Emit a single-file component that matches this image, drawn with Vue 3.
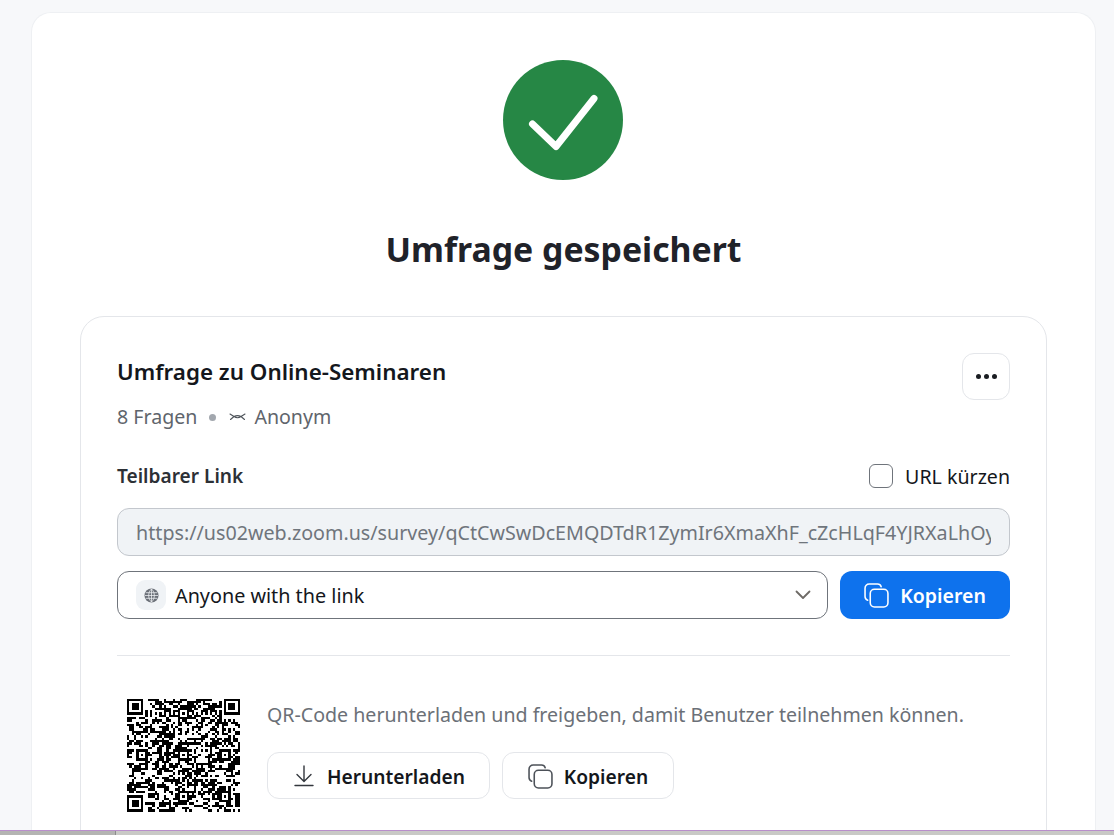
<script setup>
const N = 49
const cells = []
let seed = 20240611
const rnd = () => { seed = (seed * 1664525 + 1013904223) >>> 0; return (seed >>> 16) / 65536 }
const inFinder = (x, y) => (x < 8 && y < 8) || (x >= N - 8 && y < 8) || (x < 8 && y >= N - 8)
const finder = (x, y, ox, oy) => {
  const a = x - ox, b = y - oy
  if (a < 0 || b < 0 || a > 6 || b > 6) return false
  return a === 0 || b === 0 || a === 6 || b === 6 || (a >= 2 && a <= 4 && b >= 2 && b <= 4)
}
const aligns = [6, 24, 42]
for (let y = 0; y < N; y++) {
  let prev = false
  for (let x = 0; x < N; x++) {
    let on
    if (inFinder(x, y)) on = finder(x, y, 0, 0) || finder(x, y, N - 7, 0) || finder(x, y, 0, N - 7)
    else if (y === 6) on = x % 2 === 0
    else if (x === 6) on = y % 2 === 0
    else on = rnd() > (prev ? 0.42 : 0.58)
    prev = on
    if (on) cells.push({ x, y })
  }
}
for (const ay of aligns) for (const ax of aligns) {
  if ((ax === 6 && ay === 6) || (ax === 42 && ay === 6) || (ax === 6 && ay === 42)) continue
  for (let j = -2; j <= 2; j++) for (let i = -2; i <= 2; i++) {
    const idx = cells.findIndex(c => c.x === ax + i && c.y === ay + j)
    const on = Math.abs(i) === 2 || Math.abs(j) === 2 || (i === 0 && j === 0)
    if (on && idx < 0) cells.push({ x: ax + i, y: ay + j })
    if (!on && idx >= 0) cells.splice(idx, 1)
  }
}
const qrPath = cells.map(c => `M${c.x} ${c.y}h1v1h-1z`).join('')
</script>

<template>
  <div class="page">
    <div class="viewport">
      <main class="sheet">
        <svg class="success" viewBox="0 0 120 120" aria-hidden="true">
          <circle cx="60" cy="60" r="60" fill="#268745" />
          <path d="M29.500 64 L 53 86.500 L 91 38.500" fill="none" stroke="#fff" stroke-width="7" stroke-linecap="round" stroke-linejoin="round" />
        </svg>
        <h1 class="title">Umfrage gespeichert</h1>

        <section class="card">
          <div class="head">
            <div>
              <h2 class="name">Umfrage zu Online-Seminaren</h2>
              <div class="meta">
                <span>8 Fragen</span>
                <i class="dot"></i>
                <svg class="eye" viewBox="0 0 17 10" aria-hidden="true">
                  <path d="M1 2 5 4.500Q8.500 7 12 4.500L16 2M5 4.500 1.500 7.500M12 4.500 15.500 7.500M5 4.500Q8.500 2.800 12 4.500" fill="none" stroke="#4d5359" stroke-width="1.100" stroke-linecap="round" stroke-linejoin="round" />
                </svg>
                <span>Anonym</span>
              </div>
            </div>
            <button class="more" aria-label="Mehr">
              <i></i><i></i><i></i>
            </button>
          </div>

          <div class="link-head">
            <span class="link-label">Teilbarer Link</span>
            <label class="short">
              <span class="check"></span>
              <span>URL kürzen</span>
            </label>
          </div>

          <div class="url"><span>https://us02web.zoom.us/survey/qCtCwSwDcEMQDTdR1ZymIr6XmaXhF_cZcHLqF4YJRXaLhOyZ2Qk</span></div>

          <div class="access">
            <div class="select">
              <span class="globe">
                <svg viewBox="0 0 16 16" aria-hidden="true">
                  <circle cx="8" cy="8" r="7.500" fill="#6b7078" />
                  <path d="M1 8h14M1.800 5h12.400M1.800 11h12.400M8 1v14M8 1C5.500 3.500 5 6 5 8s.5 4.500 3 7M8 1c2.500 2.500 3 5 3 7s-.5 4.500-3 7" fill="none" stroke="#f0f3f6" stroke-width="0.800" />
                </svg>
              </span>
              <span class="select-text">Anyone with the link</span>
              <svg class="chev" viewBox="0 0 16 10" aria-hidden="true">
                <path d="M1.500 1.500 8 8l6.500-6.500" fill="none" stroke="#6e6a66" stroke-width="1.800" stroke-linecap="round" stroke-linejoin="round" />
              </svg>
            </div>
            <button class="primary">
              <svg class="copy" viewBox="0 0 24 24" aria-hidden="true">
                <path d="M3.500 16.500C2 16 1 14.800 1 13V5c0-2.300 1.700-4 4-4h8c1.700 0 3 1 3.500 2.500" fill="none" stroke="currentColor" stroke-width="1.500" stroke-linecap="round" />
                <rect x="6" y="6" width="17" height="17" rx="4" fill="none" stroke="currentColor" stroke-width="1.500" />
              </svg>
              Kopieren
            </button>
          </div>

          <hr class="rule" />

          <div class="qr-row">
            <svg class="qr" viewBox="0 0 49 49" shape-rendering="crispEdges" aria-hidden="true">
              <path :d="qrPath" fill="#000" />
            </svg>
            <div class="qr-side">
              <p class="qr-text">QR-Code herunterladen und freigeben, damit Benutzer teilnehmen können.</p>
              <div class="qr-actions">
                <button class="ghost ghost-dl">
                  <svg class="dl" viewBox="0 0 20 22" aria-hidden="true">
                    <path d="M10 1v15M3 9.500 10 16.500l7-7M1 20.500h18" fill="none" stroke="#33373d" stroke-width="1.400" stroke-linecap="round" stroke-linejoin="round" />
                  </svg>
                  Herunterladen
                </button>
                <button class="ghost ghost-copy">
                  <svg class="copy" viewBox="0 0 24 24" aria-hidden="true">
                    <path d="M3.500 16.500C2 16 1 14.800 1 13V5c0-2.300 1.700-4 4-4h8c1.700 0 3 1 3.500 2.500" fill="none" stroke="#4c5158" stroke-width="1.500" stroke-linecap="round" />
                    <rect x="6" y="6" width="17" height="17" rx="4" fill="none" stroke="#4c5158" stroke-width="1.500" />
                  </svg>
                  Kopieren
                </button>
              </div>
            </div>
          </div>
        </section>
      </main>
    </div>
    <footer class="strip">
      <span class="strip-left"></span>
      <span class="strip-right"></span>
    </footer>
  </div>
</template>

<style>
html, body { margin: 0; background: #f7f8fa; }
</style>

<style scoped>
* { box-sizing: border-box; }
.page {
  height: 835px;
  width: 1114px;
  display: flex;
  flex-direction: column;
  overflow: hidden;
  background: #f7f8fa;
  font-family: "Noto Sans", "Open Sans", sans-serif;
  color: #14171c;
}
.viewport {
  flex: 1;
  min-height: 0;
  overflow: hidden;
  padding: 12px 18px 0 31px;
}
.sheet {
  background: #fff;
  border: 1px solid #eef0f3;
  border-bottom: 0;
  border-radius: 20px 20px 0 0;
  height: 1000px;
  padding-top: 47px;
  display: flex;
  flex-direction: column;
  align-items: center;
}
.success { width: 120px; height: 120px; display: block; margin-right: 1px; }
.title {
  margin: 47px 0 0;
  font-size: 33.800px;
  line-height: 44px;
  font-weight: 700;
  color: #1f2229;
}
.card {
  margin-top: 45px;
  width: 967px;
  border: 1px solid #e4e6ea;
  border-radius: 24px;
  padding: 36px 36px 60px;
  flex: none;
}
.head { display: flex; justify-content: space-between; align-items: flex-start; }
.name {
  margin: 0;
  font-size: 22.400px;
  line-height: 38px;
  font-weight: 600;
  color: #14171c;
}
.meta {
  margin-top: 13px;
  display: flex;
  align-items: center;
  font-size: 19.600px;
  line-height: 26px;
  color: #5f656c;
}
.dot { width: 7px; height: 7px; border-radius: 50%; background: #a2a7ae; margin: 0 13px 0 12px; }
.eye { width: 17px; height: 10px; margin-right: 8px; }
.more {
  width: 48px;
  height: 47px;
  border: 1px solid #e4e6ea;
  border-radius: 12px;
  background: #fff;
  display: flex;
  align-items: center;
  justify-content: center;
  gap: 3px;
  padding: 0;
}
.more i { width: 5px; height: 5px; border-radius: 50%; background: #1a1d22; }
.link-head {
  margin-top: 30px;
  display: flex;
  justify-content: space-between;
  align-items: center;
  height: 30px;
  padding-top: 2px;
}
.link-label { font-size: 19.100px; font-weight: 600; color: #2c3036; }
.short { display: flex; align-items: center; gap: 12px; font-size: 19.600px; color: #14171c; }
.check { width: 24px; height: 24px; border: 1px solid #6f747b; border-radius: 6px; background: #fff; }
.url {
  margin-top: 18px;
  height: 48px;
  background: #f0f3f6;
  border: 1px solid #c3c7cd;
  border-radius: 12px;
  padding: 1px 18px 0;
  display: flex;
  align-items: center;
  font-size: 19.700px;
  color: #6f757c;
}
.url span { display: block; overflow: hidden; white-space: nowrap; flex: 1; }
.access { margin-top: 15px; display: flex; gap: 12px; }
.select {
  flex: 1;
  height: 48px;
  border: 1px solid #6f747b;
  border-radius: 12px;
  background: #fff;
  display: flex;
  align-items: center;
  padding: 0 16px 0 18px;
}
.globe {
  width: 30px;
  height: 30px;
  border-radius: 9px;
  background: #f0f3f6;
  display: flex;
  align-items: center;
  justify-content: center;
}
.globe svg { width: 15px; height: 15px; }
.select-text { margin-left: 9px; flex: 1; font-size: 19.800px; color: #14171c; }
.chev { width: 16px; height: 10px; }
.primary {
  width: 170px;
  height: 48px;
  border: 0;
  border-radius: 12px;
  background: #0e72ed;
  color: #fff;
  display: flex;
  align-items: center;
  justify-content: center;
  gap: 11px;
  font: 600 19.500px "Noto Sans", sans-serif;
}
.copy { width: 25px; height: 25px; flex: none; }
.rule { margin: 36px 0 0; border: 0; border-top: 1px solid #e4e6ea; }
.qr-row { margin-top: 42px; display: flex; }
.qr { width: 113px; height: 114px; margin-left: 10px; flex: none; }
.qr-side { margin-left: 27px; }
.qr-text {
  margin: 0;
  font-size: 19.600px;
  line-height: 34px;
  color: #6b7077;
}
.qr-actions { margin-top: 20px; display: flex; gap: 12px; }
.ghost {
  height: 47px;
  border: 1px solid #e4e6ea;
  border-radius: 12px;
  background: #fff;
  color: #14171c;
  display: flex;
  align-items: center;
  justify-content: center;
  font: 600 19.200px "Noto Sans", sans-serif;
  gap: 13px;
  padding: 1px 0 0;
}
.ghost-dl { width: 223px; gap: 13px; padding-left: 2px; }
.ghost-copy { width: 172px; gap: 11px; }
.dl { width: 20px; height: 22px; }
.strip { flex: none; height: 5px; display: flex; border-top: 1px solid #b98ecb; background: #c9c9c6; }
.strip-left { width: 116px; background: #b4b4b2; border-right: 1px solid #8c8c8c; }
.strip-right { flex: 1; }
</style>
